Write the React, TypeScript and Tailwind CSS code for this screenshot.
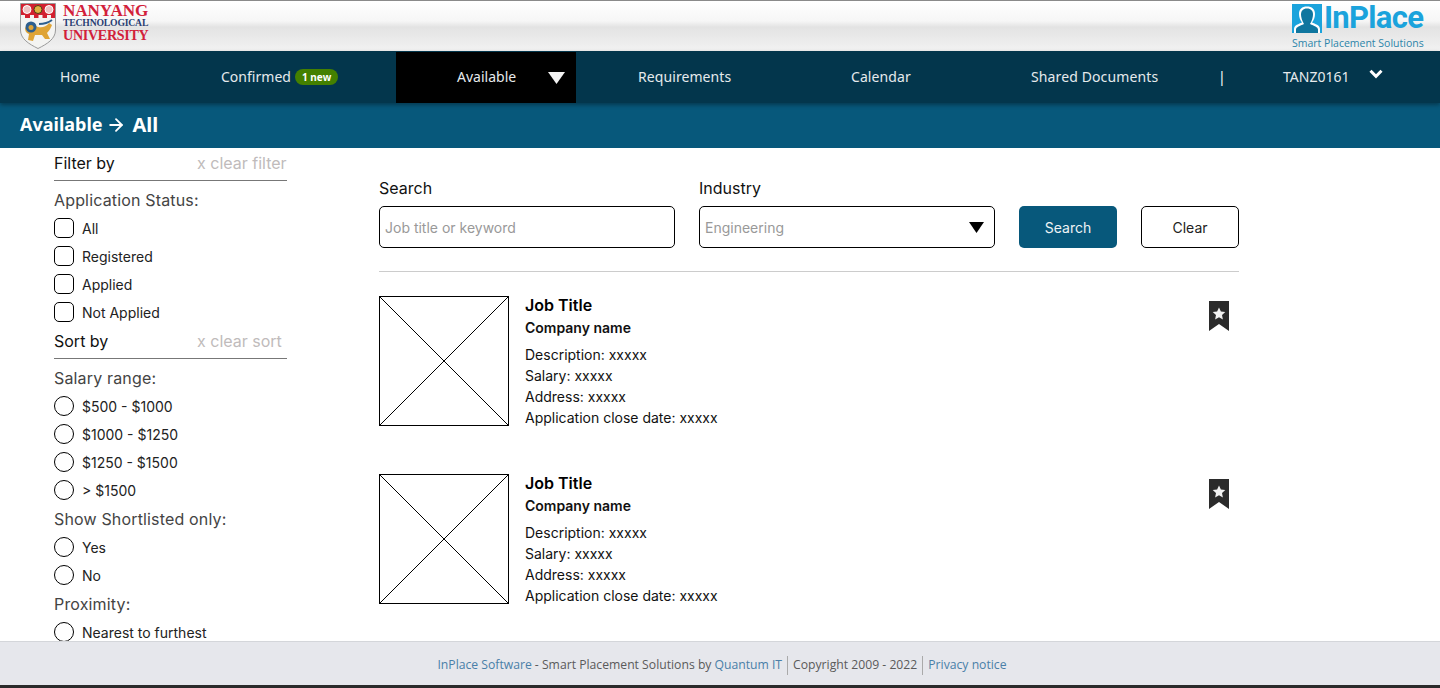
import { ArrowRight } from 'lucide-react';

const statusOptions = ['All', 'Registered', 'Applied', 'Not Applied'];
const salaryOptions = ['$500 - $1000', '$1000 - $1250', '$1250 - $1500', '> $1500'];

function NtuLogo() {
  return (
    <div className="flex items-start gap-[7px]">
      <svg width="36" height="46" viewBox="0 0 36 46" className="shrink-0">
        <path d="M0.5 0.5H35.5V27C35.5 36 27 41 18 45.5C9 41 0.5 36 0.5 27Z" fill="#f4f4f2" stroke="#9a9a9a" />
        <path d="M1 1H35V15H31V12H27V15H22.5V12H18.5V15H14V12H10V15H5V12H1Z" fill="#d2202f" />
        <circle cx="7" cy="6.5" r="4" fill="#efc4c4" stroke="#fff" />
        <circle cx="18" cy="6.5" r="4" fill="#e0b040" stroke="#4a3d18" />
        <circle cx="29" cy="6.5" r="4" fill="#efc4c4" stroke="#fff" />
        <path d="M5 25C8 21 14 22 18 24C22 25 26 24 29 20L32 22C30 27 28 29 27 30L30 36L25 36L22 32H15L13 38L8 37L9 31C6 30 5 28 5 25Z" fill="#dfa436" />
        <circle cx="11" cy="24" r="5.5" fill="#2e5f8e" />
        <circle cx="11" cy="24.5" r="2.5" fill="#dfa436" />
        <path d="M19 21C23 21 28 20 32 17" stroke="#2e5f8e" strokeWidth="2" fill="none" />
      </svg>
      <div className="flex w-[86px] flex-col font-['Liberation_Serif',serif] font-bold leading-none">
        <span className="whitespace-nowrap text-[17.1px] leading-[15px] tracking-[-0.1px] text-[#d2203a]">NANYANG</span>
        <span className="whitespace-nowrap text-[9.7px] leading-[10px] tracking-[-0.2px] text-[#2b3f73]">TECHNOLOGICAL</span>
        <span className="whitespace-nowrap text-[14.1px] leading-[14px] tracking-[-0.3px] text-[#d2203a]">UNIVERSITY</span>
      </div>
    </div>
  );
}

function InPlaceLogo() {
  return (
    <div className="flex w-[133px] flex-col items-start">
      <div className="flex h-[33px] items-start">
        <svg width="30" height="29" viewBox="0 0 30 29" className="mt-[3px] shrink-0">
          <rect width="30" height="29" fill="#1ba3dc" />
          <path d="M2 29V25C2 21 7 20 10 18.5C8 16 7 13 7 10C7 5 10 2.5 15 2.5C20 2.5 23 5 23 10C23 13 22 16 20 18.5C23 20 28 21 28 25V29Z" fill="#fff" />
          <path d="M4 29V25.5C4 23 8 22 12 20C10 17 9 13 9 10.5C9 7 11 4.5 15 4.5C19 4.5 21 7 21 10.5C21 13 20 17 18 20C22 22 26 23 26 25.5V29Z" fill="#0f769f" />
        </svg>
        <span className="ml-[2px] mt-[-3px] font-['Roboto',sans-serif] text-[31px] font-bold leading-[40px] tracking-[-0.7px] text-[#1ba3dc]">InPlace</span>
      </div>
      <span className="mt-[2px] whitespace-nowrap font-['Open_Sans',sans-serif] text-[10.5px] leading-[14px] text-[#2c85aa]">Smart Placement Solutions</span>
    </div>
  );
}

function TopNav() {
  return (
    <nav className="relative z-10 flex h-[52px] items-center bg-[#03364c] pb-[2px] font-['Noto_Sans',sans-serif] text-[14px] tracking-[0.02px] text-[#e6eaec] shadow-[0_2px_4px_rgba(0,0,0,0.35)]">
      <span className="ml-[60px] w-[161px]">Home</span>
      <span className="flex w-[175px] items-center">
        Confirmed
        <span className="ml-[4px] mt-[2px] rounded-full bg-[#448000] px-[7px] text-[10px] font-bold leading-[16px] text-white">1 new</span>
      </span>
      <span className="mb-[-2px] mt-[1px] flex w-[180px] items-center self-stretch bg-black pb-[2px] pl-[61px]">
        Available
        <svg width="17" height="12" viewBox="0 0 17 12" className="ml-[32px] mt-[3px]">
          <path d="M0 0H17L8.5 12Z" fill="#f2f2f2" />
        </svg>
      </span>
      <span className="ml-[62px] w-[213px] tracking-[0.08px]">Requirements</span>
      <span className="w-[180px] tracking-[0.08px]">Calendar</span>
      <span className="w-[187px] tracking-[0.12px]">Shared Documents</span>
      <span className="w-[65px] text-white">|</span>
      <span>TANZ0161</span>
      <svg width="14" height="10" viewBox="0 0 14 10" className="ml-[19px] mt-[-4px]">
        <path d="M1.5 1.8L7 7.3L12.5 1.8" stroke="#fff" strokeWidth="3" fill="none" />
      </svg>
    </nav>
  );
}

function CheckRow({ label }: { label: string }) {
  return (
    <label className="flex h-7 items-center gap-2 text-[14px] text-[#222]">
      <span className="h-5 w-5 rounded-[5px] border border-black" />
      {label}
    </label>
  );
}

function RadioRow({ label }: { label: string }) {
  return (
    <label className="flex h-7 items-center gap-2 text-[14px] text-[#222]">
      <span className="h-5 w-5 rounded-full border border-black" />
      {label}
    </label>
  );
}

function GroupTitle({ children, className }: { children: string; className: string }) {
  return <div className={`flex h-7 items-center text-[16px] tracking-[0.16px] text-[#444] ${className}`}>{children}</div>;
}

function Sidebar() {
  return (
    <aside className="ml-[54px] w-[233px] shrink-0 pt-[2px]">
      <div className="flex h-[31px] items-center justify-between border-b-[1.5px] border-[#777] pb-[4px] text-[16px]">
        <span className="text-[#111]">Filter by</span>
        <span className="w-[90px] text-[#c0bbbb]">x clear filter</span>
      </div>
      <GroupTitle className="mt-[5px]">Application Status:</GroupTitle>
      {statusOptions.map(o => (
        <CheckRow key={o} label={o} />
      ))}
      <div className="flex h-[33px] items-center justify-between border-b-[1.5px] border-[#777] pb-[2px] text-[16px]">
        <span className="text-[#111]">Sort by</span>
        <span className="w-[90px] text-[#c0bbbb]">x clear sort</span>
      </div>
      <GroupTitle className="mt-[5px]">Salary range:</GroupTitle>
      {salaryOptions.map(o => (
        <RadioRow key={o} label={o} />
      ))}
      <GroupTitle className="mt-px">Show Shortlisted only:</GroupTitle>
      <RadioRow label="Yes" />
      <RadioRow label="No" />
      <GroupTitle className="mt-px">Proximity:</GroupTitle>
      <RadioRow label="Nearest to furthest" />
    </aside>
  );
}

function JobCard() {
  return (
    <div className="flex h-[130px]">
      <svg width="130" height="130" viewBox="0 0 130 130" className="shrink-0">
        <rect x="0.5" y="0.5" width="129" height="129" fill="none" stroke="#000" />
        <path d="M0.5 0.5L129.5 129.5M129.5 0.5L0.5 129.5" stroke="#000" fill="none" />
      </svg>
      <div className="ml-[16px] flex-1 text-[14px] leading-[21px] text-[#111]">
        <div className="mt-[-1px] text-[16px] font-semibold leading-[20px] text-black">Job Title</div>
        <div className="mt-[2px] font-semibold">Company name</div>
        <div className="mt-[6px]">Description: xxxxx</div>
        <div>Salary: xxxxx</div>
        <div>Address: xxxxx</div>
        <div>Application close date: xxxxx</div>
      </div>
      <svg width="20" height="30" viewBox="0 0 20 30" className="mr-[10px] mt-[5px] shrink-0">
        <path d="M0 0H20V30L10 23L0 30Z" fill="#2b2b2b" />
        <path d="M10 6.5L11.9 10.6L16.3 11.1L13 14.1L13.9 18.5L10 16.3L6.1 18.5L7 14.1L3.7 11.1L8.1 10.6Z" fill="#f2f2f2" />
      </svg>
    </div>
  );
}

function SearchBar() {
  return (
    <div className="flex items-end gap-6 border-b border-[#ccc] pb-[23px]">
      <div className="w-[296px]">
        <div className="mb-[8px] text-[16px] leading-[20px] text-[#111]">Search</div>
        <input
          placeholder="Job title or keyword"
          className="h-[42px] w-full rounded-[5px] border border-black px-[5px] text-[14px] placeholder:text-[#999]"
        />
      </div>
      <div className="w-[296px]">
        <div className="mb-[8px] text-[16px] leading-[20px] text-[#111]">Industry</div>
        <div className="flex h-[42px] items-center justify-between rounded-[5px] border border-black pl-[5px] pr-[10px] text-[14px] text-[#999]">
          Engineering
          <svg width="15" height="11" viewBox="0 0 15 11">
            <path d="M0 0H15L7.5 11Z" fill="#000" />
          </svg>
        </div>
      </div>
      <button className="h-[42px] w-[98px] rounded-[5px] bg-[#07587b] text-[14px] text-[#eef3f5]">Search</button>
      <button className="h-[42px] w-[98px] rounded-[5px] border border-black text-[14px] text-[#222]">Clear</button>
    </div>
  );
}

export default function App() {
  return (
    <div className="flex h-[688px] flex-col overflow-hidden bg-white font-['Inter',sans-serif]">
      <header className="flex h-[51px] shrink-0 items-start justify-between border-t border-[#8a8a8a] bg-[linear-gradient(to_bottom,#ffffff_0%,#f6f6f6_40%,#e3e3e3_52%,#f2f2f2_100%)] pl-[20px] pr-[15px]">
        <div className="pt-[2px]">
          <NtuLogo />
        </div>
        <InPlaceLogo />
      </header>
      <TopNav />
      <div className="flex h-[45px] shrink-0 items-center bg-[#07587b] pb-[2px] pl-[20px] font-['Noto_Sans',sans-serif] text-[18px] font-bold text-white">
        Available
        <ArrowRight size={20} strokeWidth={2.2} className="mx-[3px]" />
        <span className="ml-[4px] text-[20px]">All</span>
      </div>
      <main className="flex min-h-0 flex-1 overflow-hidden">
        <Sidebar />
        <section className="ml-[92px] w-[860px] shrink-0 pt-[30px]">
          <SearchBar />
          <div className="mt-[24px] flex flex-col gap-[48px]">
            <JobCard />
            <JobCard />
          </div>
        </section>
      </main>
      <footer className="flex h-[44px] shrink-0 items-center justify-center border-t border-[#d4d6da] bg-[#e6e7ec] pl-[4px] pt-[4px] font-['Open_Sans',sans-serif] text-[12.2px] text-[#5a5a5a]">
        <span className="text-[#4a7fa8]">InPlace Software</span>
        <span className="ml-[3px]">- Smart Placement Solutions by</span>
        <span className="ml-[3px] text-[#4a7fa8]">Quantum IT</span>
        <span className="ml-[5px] border-l border-[#aaa] pl-[5px]">Copyright 2009 - 2022</span>
        <span className="ml-[5px] border-l border-[#aaa] pl-[5px] text-[#4a7fa8]">Privacy notice</span>
      </footer>
      <div className="h-[3px] shrink-0 bg-[#2a2a2a]" />
    </div>
  );
}
